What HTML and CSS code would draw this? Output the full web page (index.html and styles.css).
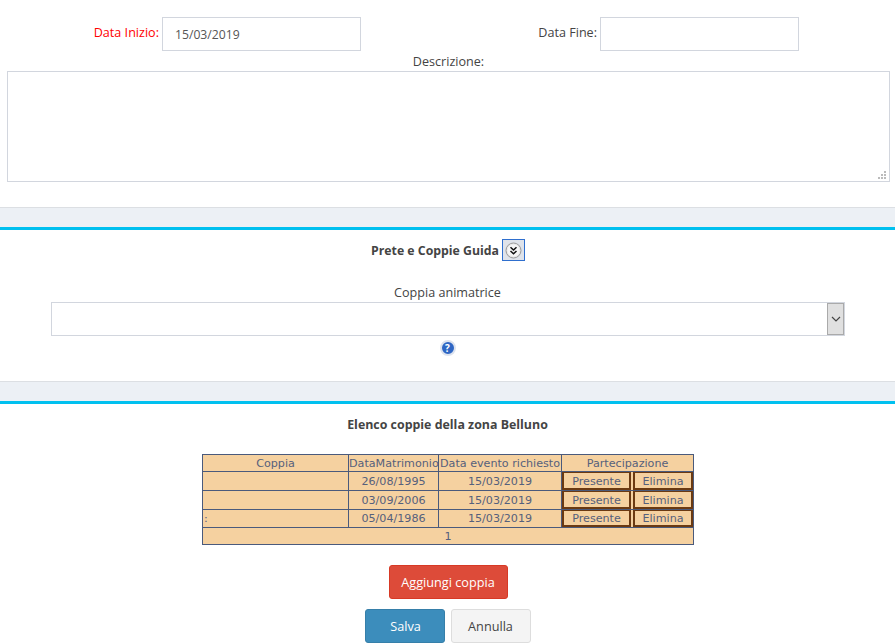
FILE: index.html
```html
<!DOCTYPE html>
<html lang="en">
<head>
    <meta charset="UTF-8">
    <meta name="viewport" content="width=device-width, initial-scale=1.0">
    <title>Evento</title>
    <link rel="stylesheet" href="styles.css">
</head>
<body>

    <!-- Date -->
    <div class="dates">
        <label class="date-label required">Data Inizio:</label>
        <input class="field" type="text" value="15/03/2019">
        <label class="date-label">Data Fine:</label>
        <input class="field" type="text">
    </div>

    <!-- Descrizione -->
    <div class="description">
        <label>Descrizione:</label>
        <div class="area-wrap">
            <textarea class="field-area"></textarea>
            <svg class="grip" width="8" height="8" viewBox="0 0 8 8">
                <path d="M6 0h2v2H6zM3 3h2v2H3zM6 3h2v2H6zM0 6h2v2H0zM3 6h2v2H3zM6 6h2v2H6z" fill="#bbb"/>
            </svg>
        </div>
    </div>

    <div class="band"></div>

    <!-- Prete e Coppie Guida -->
    <div class="section-guide">
        <div class="section-title">
            <span>Prete e Coppie Guida</span>
            <button class="toggle" type="button" aria-label="Espandi">
                <svg width="17" height="17" viewBox="0 0 17 17">
                    <circle cx="8.5" cy="8.5" r="7.5" fill="#e8e8e8" stroke="#9a9a9a"/>
                    <circle cx="8.5" cy="8.5" r="6" fill="#f6f6f6"/>
                    <path d="M5.5 5.2 8.5 8 11.5 5.2M5.5 9 8.5 11.8 11.5 9" fill="none" stroke="#111" stroke-width="1.5"/>
                </svg>
            </button>
        </div>
        <div class="select-label">Coppia animatrice</div>
        <div class="select-box">
            <select class="select-input"></select>
            <div class="select-arrow">
                <svg width="10" height="6" viewBox="0 0 10 6">
                    <path d="M1 1 5 5 9 1" fill="none" stroke="#444" stroke-width="1.2"/>
                </svg>
            </div>
        </div>
        <div class="help"><span class="help-icon">?</span></div>
    </div>

    <div class="band"></div>

    <!-- Elenco coppie -->
    <div class="section-list">
        <div class="list-title">Elenco coppie della zona Belluno</div>
        <table class="couples">
            <thead>
                <tr>
                    <th class="col-name">Coppia</th>
                    <th class="col-date">DataMatrimonio</th>
                    <th class="col-event">Data evento richiesto</th>
                    <th class="col-actions">Partecipazione</th>
                </tr>
            </thead>
            <tbody>
                <tr>
                    <td></td>
                    <td>26/08/1995</td>
                    <td>15/03/2019</td>
                    <td class="actions"><div class="action-row"><a class="action action-main">Presente</a><a class="action">Elimina</a></div></td>
                </tr>
                <tr>
                    <td></td>
                    <td>03/09/2006</td>
                    <td>15/03/2019</td>
                    <td class="actions"><div class="action-row"><a class="action action-main">Presente</a><a class="action">Elimina</a></div></td>
                </tr>
                <tr>
                    <td class="name-cell">:</td>
                    <td>05/04/1986</td>
                    <td>15/03/2019</td>
                    <td class="actions"><div class="action-row"><a class="action action-main">Presente</a><a class="action">Elimina</a></div></td>
                </tr>
            </tbody>
            <tfoot>
                <tr>
                    <td colspan="4">1</td>
                </tr>
            </tfoot>
        </table>

        <button class="btn btn-danger" type="button">Aggiungi coppia</button>
        <div class="form-buttons">
            <button class="btn btn-primary" type="button">Salva</button>
            <button class="btn btn-default" type="button">Annulla</button>
        </div>
    </div>

</body>
</html>
```

FILE: styles.css
```css
body {
    font-family: "Open Sans", sans-serif;
    font-size: 12.6px;
    margin: 0;
    padding: 0;
    background-color: #fff;
    color: #444;
}

.dates {
    display: grid;
    grid-template-columns: 162px 199px 239px 199px;
    padding-top: 17px;
}

.date-label {
    text-align: right;
    padding: 7px 3px 0 0;
    line-height: 17px;
}

.required {
    color: #f00;
}

.field {
    box-sizing: border-box;
    width: 199px;
    height: 34px;
    border: 1px solid #d2d6de;
    padding: 0 12px;
    font-family: inherit;
    font-size: 12.2px;
    color: #555;
    outline: none;
}

.description {
    display: flex;
    flex-direction: column;
    align-items: center;
    padding: 2px 5px 25px 7px;
}

.description label {
    line-height: 18px;
    height: 18px;
}

.area-wrap {
    position: relative;
    width: 883px;
    height: 111px;
}

.field-area {
    box-sizing: border-box;
    display: block;
    width: 883px;
    height: 111px;
    margin: 0;
    border: 1px solid #d2d6de;
    outline: none;
    resize: none;
}

.grip {
    position: absolute;
    right: 4px;
    bottom: 3px;
}

.band {
    box-sizing: border-box;
    height: 23px;
    background-color: #ecf0f5;
    border-top: 1px solid #dcdfe3;
    border-bottom: 3px solid #00c0ef;
}

.section-guide {
    height: 151px;
}

.section-title {
    display: flex;
    justify-content: center;
    align-items: center;
    gap: 3px;
    padding: 9px 0 0 1px;
    font-weight: bold;
    font-size: 12.3px;
}

.toggle {
    box-sizing: border-box;
    width: 23px;
    height: 22px;
    padding: 0;
    border: 1px solid #2f6fce;
    background-color: #dfe3ea;
    display: flex;
    align-items: center;
    justify-content: center;
}

.select-label {
    text-align: center;
    line-height: 18px;
    margin-top: 23px;
}

.select-box {
    box-sizing: border-box;
    display: flex;
    width: 794px;
    height: 34px;
    margin-left: 51px;
    border: 1px solid #d2d6de;
}

.select-input {
    flex: 1;
    border: none;
    appearance: none;
    background-color: #fff;
    outline: none;
}

.select-arrow {
    box-sizing: border-box;
    width: 17px;
    background-color: #e0e0e0;
    border: 1px solid #aaa;
    display: flex;
    align-items: center;
    justify-content: center;
}

.help {
    display: flex;
    justify-content: center;
    padding-top: 4px;
}

.help-icon {
    box-sizing: border-box;
    width: 16px;
    height: 16px;
    border-radius: 50%;
    background-color: #2e66c4;
    border: 2px solid #dde3ee;
    color: white;
    font-size: 10px;
    font-weight: bold;
    line-height: 12px;
    text-align: center;
}

.section-list {
    display: flex;
    flex-direction: column;
    align-items: center;
}

.list-title {
    font-weight: bold;
    font-size: 12.4px;
    line-height: 18px;
    margin-top: 12px;
}

.couples {
    border-collapse: collapse;
    table-layout: fixed;
    width: 491px;
    margin: 20px 0 20px 1px;
    background-color: #f5d1a0;
    color: #55607c;
    font-family: "DejaVu Sans", sans-serif;
    font-size: 11.15px;
}

.couples th,
.couples td {
    border: 1px solid #4a5a7c;
    padding: 1px 0 0 0;
    font-weight: normal;
    text-align: center;
    height: 15px;
    line-height: 14px;
    white-space: nowrap;
    overflow: hidden;
}

.col-name {
    width: 145px;
}

.col-date {
    width: 89px;
}

.col-event {
    width: 122px;
}

.col-actions {
    width: 131px;
}

.couples .name-cell {
    text-align: left;
    padding-left: 1px;
}

.couples .actions {
    height: 18px;
    padding-top: 0;
}

.couples tbody tr:last-child .actions {
    height: 17px;
}

.action-row {
    display: flex;
    justify-content: space-between;
}

.action {
    box-sizing: border-box;
    height: 18px;
    padding-top: 2px;
    line-height: 13px;
    border: 2px solid #6b3a12;
    border-top-width: 1px;
    width: 60px;
}

.couples tbody tr:last-child .action {
    height: 17px;
    line-height: 12px;
}

.action-main {
    width: 69px;
}

.btn {
    box-sizing: border-box;
    height: 34px;
    border-radius: 3px;
    font-family: inherit;
    font-size: 12.7px;
    padding: 0;
    border: 1px solid transparent;
    white-space: nowrap;
}

.btn-danger {
    width: 119px;
    margin-left: 1px;
    background-color: #dd4b39;
    border-color: #d73925;
    color: white;
}

.form-buttons {
    display: flex;
    gap: 6px;
    margin-top: 10px;
}

.btn-primary {
    width: 80px;
    padding-left: 2px;
    background-color: #3c8dbc;
    border-color: #367fa9;
    color: white;
}

.btn-default {
    width: 80px;
    background-color: #f4f4f4;
    border-color: #ddd;
    color: #444;
}
```
